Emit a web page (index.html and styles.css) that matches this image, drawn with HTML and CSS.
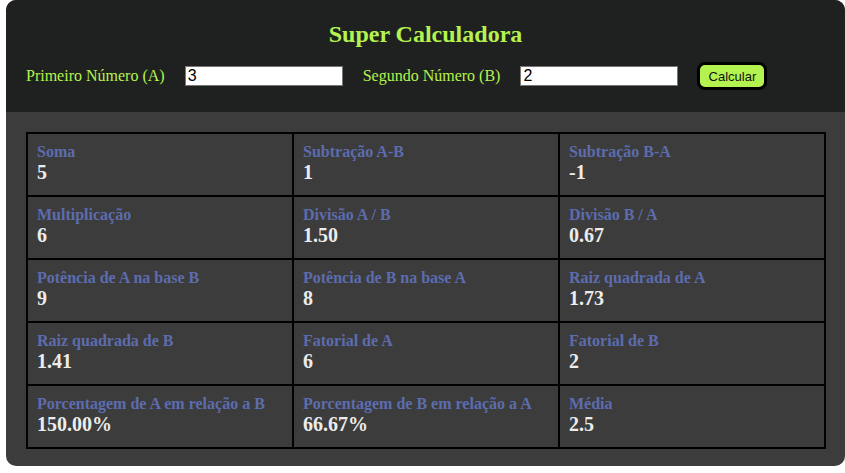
FILE: index.html
```html
<!DOCTYPE html>
<html lang="pt-BR">
<head>
<meta charset="utf-8">
<title>Super Calculadora</title>
<link rel="stylesheet" href="styles.css">
</head>
<body>
<div class="app">
  <header class="top">
    <h1 class="title">Super Calculadora</h1>
    <div class="form">
      <label class="lbl" for="a">Primeiro Número (A)</label>
      <input class="inp" id="a" type="text" value="3">
      <label class="lbl" for="b">Segundo Número (B)</label>
      <input class="inp" id="b" type="text" value="2">
      <button class="btn" type="button">Calcular</button>
    </div>
  </header>
  <main class="body">
    <div class="grid">
      <div class="cell"><div class="name">Soma</div><div class="val">5</div></div>
      <div class="cell"><div class="name">Subtração A-B</div><div class="val">1</div></div>
      <div class="cell"><div class="name">Subtração B-A</div><div class="val">-1</div></div>
      <div class="cell"><div class="name">Multiplicação</div><div class="val">6</div></div>
      <div class="cell"><div class="name">Divisão A / B</div><div class="val">1.50</div></div>
      <div class="cell"><div class="name">Divisão B / A</div><div class="val">0.67</div></div>
      <div class="cell"><div class="name">Potência de A na base B</div><div class="val">9</div></div>
      <div class="cell"><div class="name">Potência de B na base A</div><div class="val">8</div></div>
      <div class="cell"><div class="name">Raiz quadrada de A</div><div class="val">1.73</div></div>
      <div class="cell"><div class="name">Raiz quadrada de B</div><div class="val">1.41</div></div>
      <div class="cell"><div class="name">Fatorial de A</div><div class="val">6</div></div>
      <div class="cell"><div class="name">Fatorial de B</div><div class="val">2</div></div>
      <div class="cell"><div class="name">Porcentagem de A em relação a B</div><div class="val">150.00%</div></div>
      <div class="cell"><div class="name">Porcentagem de B em relação a A</div><div class="val">66.67%</div></div>
      <div class="cell"><div class="name">Média</div><div class="val">2.5</div></div>
    </div>
  </main>
</div>
</body>
</html>
```

FILE: styles.css
```css
html, body {
  margin: 0;
  padding: 0;
  background: #ffffff;
}
body {
  padding-left: 6px;
  font-family: "Liberation Serif", "Times New Roman", serif;
  overflow: hidden;
}
.app {
  width: 839px;
  height: 466px;
  border-radius: 10px;
  overflow: hidden;
  display: flex;
  flex-direction: column;
  background: #3c3c3c;
}
.top {
  background: #1f2120;
  height: 112px;
  box-sizing: border-box;
  padding: 20px 20px 0 20px;
  display: flex;
  flex-direction: column;
  align-items: center;
}
.title {
  margin: 0;
  font-size: 24px;
  line-height: 28px;
  font-weight: bold;
  color: #b4f34f;
}
.form {
  align-self: stretch;
  display: flex;
  align-items: center;
  gap: 20px;
  margin-top: 14px;
}
.lbl {
  color: #b4f34f;
  font-size: 16px;
}
.inp {
  width: 158px;
  height: 20px;
  box-sizing: border-box;
  border: 1px solid #767676;
  padding: 0 2px;
  font-family: "Liberation Sans", Arial, sans-serif;
  font-size: 16px;
  color: #000;
  background: #fff;
}
.btn {
  margin-left: -1px;
  width: 70px;
  height: 28px;
  box-sizing: border-box;
  background: #b4f34f;
  border: 3px solid #000;
  border-radius: 8px;
  font-family: "Liberation Sans", Arial, sans-serif;
  font-size: 13px;
  color: #111;
  padding: 0;
}
.body {
  flex: 1;
  padding: 20px 19px 0 20px;
}
.grid {
  display: grid;
  grid-template-columns: repeat(3, 1fr);
  grid-template-rows: repeat(5, 63px);
  border: 1px solid #000;
}
.cell {
  border: 1px solid #000;
  padding: 8px 9px;
  font-weight: bold;
}
.name {
  color: #5d6cae;
  font-size: 16px;
  line-height: 19px;
}
.val {
  color: #ececec;
  font-size: 20px;
  line-height: 23px;
}
```
